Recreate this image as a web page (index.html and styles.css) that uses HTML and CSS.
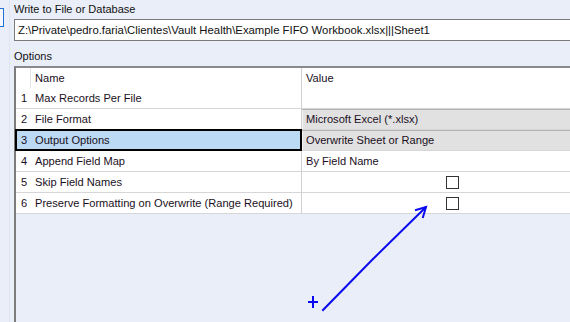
FILE: index.html
```html
<!DOCTYPE html>
<html>
<head>
<meta charset="utf-8">
<link rel="stylesheet" href="styles.css">
</head>
<body>
<div class="page">
  <div class="side">
    <div class="side-btn"></div>
  </div>
  <div class="main">
    <div class="label">Write to File or Database</div>
    <div class="path">Z:\Private\pedro.faria\Clientes\Vault Health\Example FIFO Workbook.xlsx|||Sheet1</div>
    <div class="label options-label">Options</div>
    <div class="grid">
      <div class="row head">
        <div class="num"></div>
        <div class="name">Name</div>
        <div class="value">Value</div>
      </div>
      <div class="row">
        <div class="num">1</div>
        <div class="name">Max Records Per File</div>
        <div class="value"></div>
      </div>
      <div class="row">
        <div class="num">2</div>
        <div class="name">File Format</div>
        <div class="value combo">Microsoft Excel (*.xlsx)</div>
      </div>
      <div class="row">
        <div class="sel">
          <div class="num">3</div>
          <div class="name">Output Options</div>
        </div>
        <div class="value combo">Overwrite Sheet or Range</div>
      </div>
      <div class="row">
        <div class="num">4</div>
        <div class="name">Append Field Map</div>
        <div class="value">By Field Name</div>
      </div>
      <div class="row">
        <div class="num">5</div>
        <div class="name">Skip Field Names</div>
        <div class="value"><span class="check"></span></div>
      </div>
      <div class="row last">
        <div class="num">6</div>
        <div class="name">Preserve Formatting on Overwrite (Range Required)</div>
        <div class="value"><span class="check"></span></div>
      </div>
    </div>
  </div>
</div>
<svg class="arrow" width="570" height="322" viewBox="0 0 570 322">
  <g stroke="#0a0af0" stroke-width="2" fill="none" stroke-linecap="square">
    <path d="M323 310 L372 260 L425 208"/>
    <path d="M416 210 L426 207 L423 217"/>
    <path d="M309 302 H317 M313 297 V307"/>
  </g>
</svg>
</body>
</html>
```

FILE: styles.css
```css
html, body {
  margin: 0;
  padding: 0;
  height: 100%;
  overflow: hidden;
}
body {
  background: #eaeef8;
  font-family: "Liberation Sans", Arial, sans-serif;
  font-size: 11px;
  color: #111;
  position: relative;
}
.page {
  display: flex;
  height: 322px;
  width: 570px;
}
.side {
  width: 9px;
  border-right: 1px solid #e1e5ef;
  flex: none;
}
.side-btn {
  margin-top: 8px;
  width: 3px;
  height: 17px;
  border: 1px solid #1e73d2;
  border-left: none;
  background: #f6f8fd;
}
.main {
  flex: 1;
  padding: 2px 0 0 4px;
  min-width: 0;
  display: flex;
  flex-direction: column;
}
.label {
  height: 14px;
  line-height: 14px;
  color: #111;
}
.path {
  margin-top: 3px;
  height: 20px;
  line-height: 20px;
  font-size: 11.35px;
  border: 1px solid #7a7a7a;
  border-right: none;
  background: #fff;
  padding-left: 3px;
  white-space: nowrap;
  overflow: hidden;
}
.options-label {
  margin-top: 8px;
}
.grid {
  margin-top: 3px;
  flex: 1;
  border-top: 2px solid #8a8a8a;
  border-left: 2px solid #7c7c7c;
  color: #1a0f22;
  font-size: 11.1px;
}
.row {
  display: flex;
  height: 20px;
  line-height: 20px;
  background: #fff;
  border-bottom: 1px solid #d6d6d6;
}
.row.head {
  border-bottom: none;
}
.num {
  width: 15px;
  padding-left: 5px;
  box-sizing: border-box;
  flex: none;
}
.head .num {
  border-right: 1px solid #e4e4e4;
}
.name {
  width: 270px;
  padding-left: 4px;
  box-sizing: border-box;
  flex: none;
  white-space: nowrap;
}
.value {
  flex: 1;
  border-left: 1px solid #d0d0d0;
  padding-left: 4px;
  white-space: nowrap;
  display: flex;
  align-items: center;
}
.combo {
  background: #e1e1e1;
  box-shadow: inset 0 1px 0 #b3b3b3, inset 1px 0 0 #f4f4f4;
}
.sel {
  display: flex;
  width: 285px;
  flex: none;
  background: #bcdaf3;
  outline: 2px solid #000;
  outline-offset: -1px;
  position: relative;
}
.sel .name {
  width: 270px;
}
.check {
  display: block;
  width: 11px;
  height: 11px;
  border: 1px solid #333;
  background: #fff;
  margin-left: 140px;
}
.arrow {
  position: absolute;
  left: 0;
  top: 0;
  pointer-events: none;
}
```
